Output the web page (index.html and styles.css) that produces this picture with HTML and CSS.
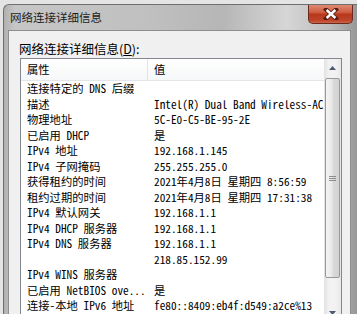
FILE: index.html
```html
<!DOCTYPE html>
<html>
<head>
  <meta charset="utf-8">
  <title>网络连接详细信息</title>
  <link rel="stylesheet" href="styles.css">
</head>
<body>
  <div class="win">
    <div class="win-title">
      <span class="win-caption">网络连接详细信息</span>
      <div class="win-close">
        <svg width="16" height="12" viewBox="0 0 16 12">
          <path d="M3 1.5 L13 10.5 M13 1.5 L3 10.5" stroke="#5a1d12" stroke-width="4.2" stroke-linecap="square"/>
          <path d="M3.6 2 L12.4 10 M12.4 2 L3.6 10" stroke="#fff" stroke-width="2.4"/>
        </svg>
      </div>
    </div>
    <div class="win-body">
      <div class="label">网络连接详细信息(<u>D</u>):</div>
      <div class="list">
        <div class="list-view">
          <div class="list-head">
            <div class="col-key">属性</div>
            <div class="col-val">值</div>
          </div>
          <div class="list-row"><div class="col-key">连接特定的 DNS 后缀</div><div class="col-val"></div></div>
          <div class="list-row"><div class="col-key">描述</div><div class="col-val">Intel(R) Dual Band Wireless-AC</div></div>
          <div class="list-row"><div class="col-key">物理地址</div><div class="col-val">5C-E0-C5-BE-95-2E</div></div>
          <div class="list-row"><div class="col-key">已启用 DHCP</div><div class="col-val">是</div></div>
          <div class="list-row"><div class="col-key">IPv4 地址</div><div class="col-val">192.168.1.145</div></div>
          <div class="list-row"><div class="col-key">IPv4 子网掩码</div><div class="col-val">255.255.255.0</div></div>
          <div class="list-row"><div class="col-key">获得租约的时间</div><div class="col-val">2021年4月8日 星期四 8:56:59</div></div>
          <div class="list-row"><div class="col-key">租约过期的时间</div><div class="col-val">2021年4月8日 星期四 17:31:38</div></div>
          <div class="list-row"><div class="col-key">IPv4 默认网关</div><div class="col-val">192.168.1.1</div></div>
          <div class="list-row"><div class="col-key">IPv4 DHCP 服务器</div><div class="col-val">192.168.1.1</div></div>
          <div class="list-row"><div class="col-key">IPv4 DNS 服务器</div><div class="col-val">192.168.1.1</div></div>
          <div class="list-row"><div class="col-key"></div><div class="col-val">218.85.152.99</div></div>
          <div class="list-row"><div class="col-key">IPv4 WINS 服务器</div><div class="col-val"></div></div>
          <div class="list-row"><div class="col-key">已启用 NetBIOS ove...</div><div class="col-val">是</div></div>
          <div class="list-row"><div class="col-key">连接-本地 IPv6 地址</div><div class="col-val">fe80::8409:eb4f:d549:a2ce%13</div></div>
          <div class="list-row"><div class="col-key">IPv6 默认网关</div><div class="col-val"></div></div>
        </div>
        <div class="scroll">
          <div class="scroll-btn">
            <svg width="7" height="4" viewBox="0 0 7 4"><polygon points="0,4 3.5,0 7,4" fill="#4e5a6e"/></svg>
          </div>
          <div class="scroll-thumb">
            <svg width="7" height="7" viewBox="0 0 7 7">
              <path d="M0 1.5 H7 M0 3.5 H7 M0 5.5 H7" stroke="#8d8d8d" stroke-width="1"/>
            </svg>
          </div>
          <div class="scroll-track"></div>
          <div class="scroll-btn">
            <svg width="7" height="4" viewBox="0 0 7 4"><polygon points="0,0 3.5,4 7,0" fill="#4e5a6e"/></svg>
          </div>
        </div>
      </div>
    </div>
  </div>
</body>
</html>
```

FILE: styles.css
```css
html,
body {
  margin: 0;
  padding: 0;
}
html {
  overflow: hidden;
}
body {
  width: 357px;
  height: 314px;
  overflow: hidden;
  background: #e4e4e4;
  color: #000;
  font-family: "Noto Sans Mono CJK SC", "Noto Sans CJK SC", monospace;
  font-size: 11.3px;
}
.win {
  margin: 4px 0 0 3px;
  width: 354px;
  box-sizing: border-box;
  border-top: 1px solid #6f6f6f;
  border-left: 1px solid #6f6f6f;
  border-radius: 6px 0 0 0;
  padding: 0 6px 0 4px;
  background: linear-gradient(to right, #b0b0b0 0, #c6c6c6 3%, #c0c0c0 40%, #b6b6b6 62%, #d6d6d6 80%, #bebebe 92%, #979797 100%);
}
.win-title {
  display: flex;
  align-items: flex-start;
  height: 25px;
}
.win-caption {
  padding-left: 2px;
  line-height: 25px;
  font-family: "Noto Sans CJK SC", sans-serif;
  font-size: 11.5px;
  color: #1c1c1c;
}
.win-close {
  margin-left: auto;
  margin-right: -2px;
  width: 45px;
  height: 19px;
  box-sizing: border-box;
  border: 1px solid #6b2a1e;
  border-top: 0;
  border-radius: 0 0 5px 5px;
  background: linear-gradient(#de8a72 0, #cf5f44 40%, #b9381c 52%, #bd4429 85%, #cd6549 100%);
  display: flex;
  align-items: center;
  justify-content: center;
}
.win-body {
  width: 343px;
  height: 300px;
  box-sizing: border-box;
  border: 1px solid #8e8e8e;
  border-bottom: 0;
  background: #f0f0f0;
  padding: 10px 0 0 10px;
}
.label {
  height: 16px;
  line-height: 16px;
  margin-bottom: 1px;
  font-family: "Noto Sans CJK SC", sans-serif;
  font-size: 12.5px;
}
.list {
  display: flex;
  margin-left: 1px;
  width: 322px;
  height: 264px;
  box-sizing: border-box;
  border: 1px solid #828790;
  background: #fff;
}
.list-view {
  flex: 1;
  overflow: hidden;
}
.list-head,
.list-row {
  display: grid;
  grid-template-columns: 127px 1fr;
  white-space: nowrap;
}
.list-head {
  height: 22px;
  box-sizing: border-box;
  line-height: 21px;
  border-bottom: 1px solid #e3e5e8;
  background: linear-gradient(#fff, #f6f7f8);
}
.list-head .col-key {
  border-right: 1px solid #e2e4e7;
}
.list-row {
  height: 15.5px;
  line-height: 15.5px;
}
.col-key {
  padding-left: 6px;
  overflow: hidden;
}
.col-val {
  padding-left: 6px;
  overflow: hidden;
}
.scroll {
  width: 17px;
  display: flex;
  flex-direction: column;
  background: linear-gradient(to right, #e2e2e2, #f2f2f2 30%, #f2f2f2 70%, #e7e7e7);
}
.scroll-btn {
  height: 18px;
  display: flex;
  align-items: center;
  justify-content: center;
}
.scroll-btn:last-child {
  height: 17px;
}
.scroll-thumb {
  height: 200px;
  margin: 1px 1px 0 1px;
  box-sizing: border-box;
  border: 1px solid #989898;
  border-radius: 2px;
  background: linear-gradient(to right, #f4f4f4, #e8e8e8 45%, #d9d9d9 55%, #d2d2d2);
  display: flex;
  align-items: center;
  justify-content: center;
}
.scroll-track {
  flex: 1;
}
```
